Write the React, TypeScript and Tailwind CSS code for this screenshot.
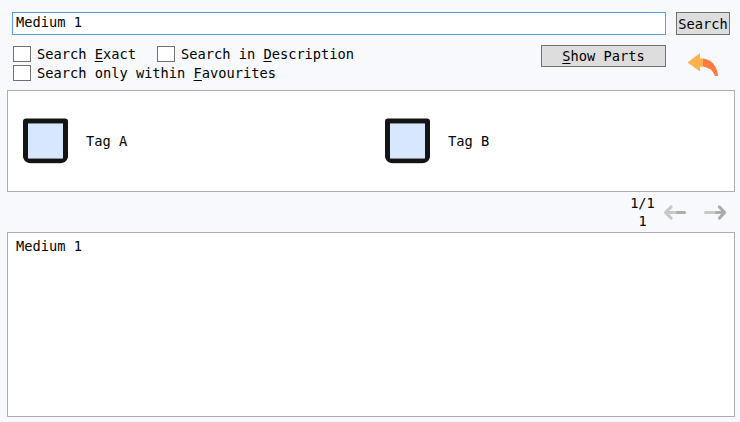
import type { ReactNode } from "react";

function Check({ children }: { children: ReactNode }) {
  return (
    <label className="flex h-[19px] items-start whitespace-pre">
      <span className="h-4 w-[18px] border border-[#707070] bg-white" />
      <span className="ml-[6px] leading-[16px]">{children}</span>
    </label>
  );
}

function Key({ children }: { children: string }) {
  return <span className="underline decoration-1 underline-offset-2">{children}</span>;
}

function Tag({ name }: { name: string }) {
  return (
    <div className="flex w-[362px] shrink-0 items-center">
      <svg width="45" height="46" viewBox="0 0 45 46">
        <path d="M7 45.300h31" stroke="#c8c8c8" />
        <path d="M3 .5H42Q45 .5 45 3.500V39Q44 44 39 45H6Q1 44 0 39V3.500Q0 .5 3 .5Z" fill="#141414" />
        <path d="M5 5h35v35.500H5z" fill="#d7e7ff" />
        <path d="M5 5.500h35M6 40.500h33" stroke="#858b95" />
      </svg>
      <span className="ml-[18px]">{name}</span>
    </div>
  );
}

function PageArrow({ forward = false }: { forward?: boolean }) {
  return (
    <svg width="23" height="15" viewBox="0 0 23 15" fill="none" strokeWidth="3.2" strokeLinecap="round" strokeLinejoin="round">
      {forward ? (
        <>
          <path d="M1.600 7.500H13" stroke="#c8c8c8" />
          <path d="M12.500 7.500H20.500M15.500 2L20.700 7.500L15.500 13" stroke="#acacac" />
        </>
      ) : (
        <>
          <path d="M12.500 7.500H20.500" stroke="#acacac" />
          <path d="M11 7.500H1.600M7 2L1.600 7.500L7 13" stroke="#c8c8c8" />
        </>
      )}
    </svg>
  );
}

export default function App() {
  return (
    <main className="flex h-[422px] w-[740px] flex-col bg-[#f7f9fc] px-[7px] pt-3 font-['DejaVu_Sans_Mono',monospace] text-[13.7px] leading-[18px] text-black">
      <div className="flex gap-[10px] pl-[5px]">
        <input
          className="h-[23px] w-[654px] border border-[#569de5] bg-white px-[3px] pb-[3px] leading-[18px] outline-none"
          defaultValue="Medium 1"
        />
        <button className="flex h-[23px] w-[54px] items-center justify-center border border-[#707070] bg-[#dddddd]">
          Search
        </button>
      </div>
      <div className="flex h-[55px] pl-[6px]">
        <div className="w-[528px] pt-[11px]">
          <div className="flex">
            <div className="w-[144px]">
              <Check>Search <Key>E</Key>xact</Check>
            </div>
            <Check>Search in <Key>D</Key>escription</Check>
          </div>
          <Check>Search only within <Key>F</Key>avourites</Check>
        </div>
        <button className="mt-[10px] flex h-[22px] w-[125px] items-center justify-center whitespace-pre border border-[#707070] bg-[#dddddd]">
          <Key>S</Key>how Parts
        </button>
        <svg className="ml-[21px] mt-[18px]" width="32" height="24" viewBox="0 0 32 24">
          <path d="M0.500 9.500L13 0V5.500H16V13.800H13V18.500Z" fill="#ffb04f" />
          <path d="M16 5.500C23 6 30.500 12 31 23H28C25.500 17 22 14.500 16 13.800Z" fill="#ff7b42" />
        </svg>
      </div>
      <section className="flex h-[102px] w-[728px] items-center border border-[#abadb3] bg-white pl-[15px]">
        <Tag name="Tag A" />
        <Tag name="Tag B" />
      </section>
      <div className="flex h-10 items-center pl-[623px]">
        <div className="w-[25px] pb-[1px] text-center leading-[18px]">
          <div>1/1</div>
          <div>1</div>
        </div>
        <div className="ml-[9px] flex gap-[17px]">
          <PageArrow />
          <PageArrow forward />
        </div>
      </div>
      <section className="h-[185px] w-[728px] border border-[#abadb3] bg-white px-2 pt-1">Medium 1</section>
    </main>
  );
}
